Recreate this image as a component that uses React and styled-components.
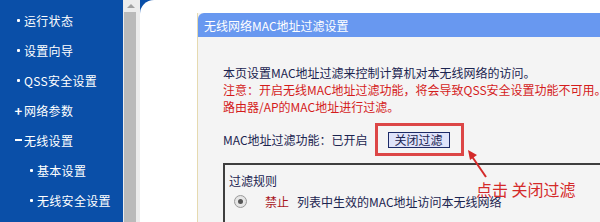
import React from "react"
import styled, { createGlobalStyle } from "styled-components"

const Global = createGlobalStyle`
  html, body {
    margin: 0;
    padding: 0;
    width: 600px;
    height: 222px;
    overflow: hidden;
    background: #ffffff;
  }
  body {
    font-family: "Noto Sans CJK SC", "Noto Sans", sans-serif;
    font-size: 12px;
  }
`

const Page = styled.div`
  position: relative;
  display: flex;
  width: 600px;
  height: 222px;
  overflow: hidden;
`

const Sidebar = styled.div`
  width: 123px;
  flex-shrink: 0;
  background: #0a4fa8;
  display: flex;
  flex-direction: column;
  padding-top: 5px;
  box-sizing: border-box;
`

const MenuItem = styled.div`
  height: 30px;
  display: flex;
  align-items: center;
  padding-left: ${props => (props.sub ? 27 : 14)}px;
  color: #ffffff;
  font-size: 12px;
  letter-spacing: 0.3px;
  white-space: nowrap;
`

const Marker = styled.span`
  width: 9px;
  display: inline-flex;
  justify-content: center;
  align-items: center;
  margin-right: 1px;

  &.dot::before {
    content: "";
    width: 3px;
    height: 3px;
    border-radius: 1px;
    background: #ffffff;
  }
  &.plus::before {
    content: "+";
    font-weight: bold;
    font-size: 13px;
    line-height: 1;
  }
  &.minus::before {
    content: "";
    width: 7px;
    height: 2px;
    background: #ffffff;
  }
`

const ScrollTrack = styled.div`
  width: 17px;
  flex-shrink: 0;
  background: #ececec;
  display: flex;
  flex-direction: column;
  align-items: flex-start;
`

const ScrollArrow = styled.div`
  width: 13px;
  height: 12px;
  display: flex;
  justify-content: center;
  align-items: center;
  margin-left: 1px;
  &::before {
    content: "";
    border-left: 4px solid transparent;
    border-right: 4px solid transparent;
    border-bottom: 4px solid #a0a0a0;
  }
`

const ScrollThumb = styled.div`
  width: 12px;
  margin-left: 1px;
  flex: 1;
  background: #bababa;
`

const MainBack = styled.div`
  flex: 1;
  background: #0a4fa8;
  display: flex;
`

const Main = styled.div`
  flex: 1;
  background: #ffffff;
  border-top-left-radius: 14px;
  padding: 13px 0 0 57px;
  display: flex;
`

const Panel = styled.div`
  flex: 1;
  display: flex;
  flex-direction: column;
  border-left: 1px solid #e6dab0;
  background: #f4f4f4;
`

const PanelTitle = styled.div`
  height: 24px;
  flex-shrink: 0;
  background: #6898f0;
  border-top-left-radius: 6px;
  color: #ffffff;
  display: flex;
  align-items: center;
  padding-left: 6px;
  font-size: 12px;
  white-space: nowrap;
`

const PanelBody = styled.div`
  padding: 27px 0 0 25px;
  display: flex;
  flex-direction: column;
  white-space: nowrap;
`

const Line = styled.div`
  height: 17px;
  line-height: 17px;
  flex-shrink: 0;
  color: ${props => (props.warn ? "#d41c1c" : "#1b2450")};
  font-size: 12px;
`

const SwitchRow = styled.div`
  display: flex;
  align-items: center;
  flex-shrink: 0;
  margin-top: 8px;
  color: #1b2450;
  gap: 7px;
`

const Highlight = styled.div`
  box-sizing: border-box;
  width: 89px;
  height: 33px;
  border: 3px solid #dc4646;
  display: flex;
  align-items: center;
  padding-left: 10px;
`

const Button = styled.button`
  height: 16px;
  padding: 0 6px;
  border: 1px solid #1c2a66;
  background: #dfe3fa;
  color: #1b2450;
  font-family: "Noto Sans CJK SC", sans-serif;
  font-size: 12px;
  line-height: 14px;
  cursor: pointer;
`

const RuleBox = styled.div`
  margin-top: 7px;
  flex-shrink: 0;
  border: 2px solid #3e3e3e;
  border-right: none;
  padding: 4px 0 20px 4px;
  display: flex;
  flex-direction: column;
  color: #1b2450;
`

const RuleRow = styled.div`
  display: flex;
  align-items: center;
  height: 22px;
  margin-top: ${props => props.gap || 0}px;
  padding-left: ${props => props.indent || 0}px;
`

const Radio = styled.span`
  width: 11px;
  height: 11px;
  flex-shrink: 0;
  border-radius: 50%;
  border: 1px solid #9a9a9a;
  background: radial-gradient(circle, #f0f0f0 0%, #dcdcdc 100%);
  display: inline-flex;
  justify-content: center;
  align-items: center;
  margin-right: 18px;
  &::after {
    content: "";
    width: 5px;
    height: 5px;
    border-radius: 50%;
    background: ${props => (props.checked ? "#555555" : "transparent")};
  }
`

const Deny = styled.span`
  color: #a8161c;
  margin-right: 8px;
`

const Note = styled.div`
  position: absolute;
  left: 466px;
  top: 149px;
  display: flex;
  flex-direction: column;
`

const NoteText = styled.div`
  position: absolute;
  left: 10px;
  top: 31px;
  color: #d42a2a;
  font-size: 16px;
  line-height: 19px;
  white-space: nowrap;
  font-family: "Noto Sans CJK SC", sans-serif;
`

const menu = [
  { label: "运行状态", kind: "dot" },
  { label: "设置向导", kind: "dot" },
  { label: "QSS安全设置", kind: "dot" },
  { label: "网络参数", kind: "plus" },
  { label: "无线设置", kind: "minus" },
  { label: "基本设置", kind: "dot", sub: true },
  { label: "无线安全设置", kind: "dot", sub: true },
]

export default function App() {
  return (
    <Page>
      <Global />
      <Sidebar>
        {menu.map(item => (
          <MenuItem key={item.label} sub={item.sub}>
            <Marker className={item.kind} />
            {item.label}
          </MenuItem>
        ))}
      </Sidebar>
      <ScrollTrack>
        <ScrollArrow />
        <ScrollThumb />
      </ScrollTrack>
      <MainBack>
        <Main>
          <Panel>
            <PanelTitle>无线网络MAC地址过滤设置</PanelTitle>
            <PanelBody>
              <Line>本页设置MAC地址过滤来控制计算机对本无线网络的访问。</Line>
              <Line warn>
                注意：开启无线MAC地址过滤功能，将会导致QSS安全设置功能不可用。 本功能只对接入本无线
              </Line>
              <Line warn>路由器/AP的MAC地址进行过滤。</Line>
              <SwitchRow>
                <span>MAC地址过滤功能：已开启</span>
                <Highlight>
                  <Button>关闭过滤</Button>
                </Highlight>
              </SwitchRow>
              <RuleBox>
                <RuleRow>过滤规则</RuleRow>
                <RuleRow indent={5} gap={-1}>
                  <Radio checked />
                  <Deny>禁止</Deny>
                  列表中生效的MAC地址访问本无线网络
                </RuleRow>
                <RuleRow indent={5} gap={5}>
                  <Radio />
                  <span>允许</span>
                </RuleRow>
              </RuleBox>
            </PanelBody>
          </Panel>
        </Main>
      </MainBack>
      <Note>
        <svg width="26" height="30" viewBox="0 0 26 30">
          <line x1="20" y1="28" x2="5" y2="6" stroke="#d42a2a" strokeWidth="2" />
          <polygon points="2,1 11,6 4,11" fill="#d42a2a" />
        </svg>
        <NoteText>点击 关闭过滤</NoteText>
      </Note>
    </Page>
  )
}
